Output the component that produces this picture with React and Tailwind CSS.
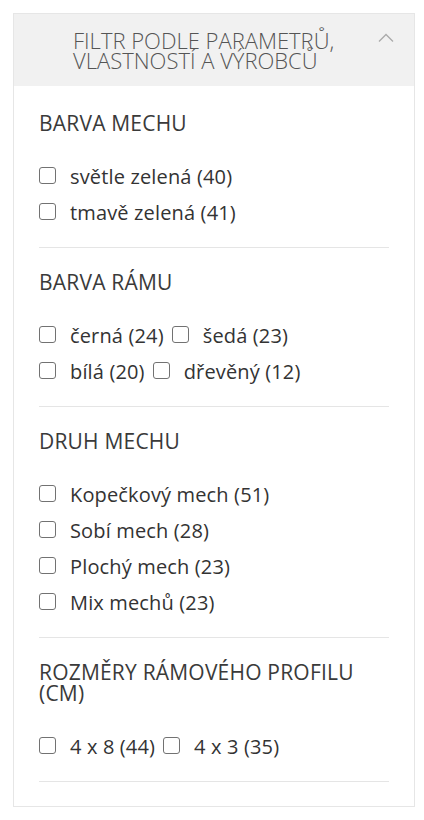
import React from 'react';

const groups = [
  { title: 'Barva mechu', inline: false, items: ['světle zelená (40)', 'tmavě zelená (41)'] },
  { title: 'Barva rámu', inline: true, items: ['černá (24)', 'šedá (23)', 'bílá (20)', 'dřevěný (12)'] },
  { title: 'Druh mechu', inline: false, items: ['Kopečkový mech (51)', 'Sobí mech (28)', 'Plochý mech (23)', 'Mix mechů (23)'] },
  { title: 'Rozměry rámového profilu (cm)', inline: true, items: ['4 x 8 (44)', '4 x 3 (35)'] },
];

const Box = () => (
  <span className="inline-block w-[17px] h-[17px] border-[1.5px] border-[#727272] rounded-[3px] bg-white shrink-0 -translate-y-[2px]" />
);

const Item = ({ label }) => (
  <label className="inline-flex items-center mr-[8px] h-[36px] cursor-pointer">
    <Box />
    <span className="ml-[14px] tracking-[0.15px]">{label}</span>
  </label>
);

const Group = ({ group }) => (
  <div className="border-b border-[#e5e5e5] pt-[24px] pb-[16px]">
    <h3 className="uppercase text-[21px] leading-[21px] text-[#3a3a3a] tracking-[0.2px]">{group.title}</h3>
    <div className={group.inline ? 'mt-[25px] flex flex-wrap' : 'mt-[25px] flex flex-col'}>
      {group.items.map((it) => (
        <Item key={it} label={it} />
      ))}
    </div>
  </div>
);

export default function App() {
  return (
    <div className="bg-white min-h-[820px] pt-[13px] px-[13px]" style={{ fontFamily: '"Open Sans", sans-serif' }}>
      <div className="border border-[#e6e6e6] w-[402px]">
        <div className="bg-[#f1f1f1] h-[72px] relative flex items-center pl-[59px] pr-[50px]">
          <h2 className="uppercase font-light text-[22px] leading-[20px] text-[#555]">
            Filtr podle parametrů, vlastností a výrobců
          </h2>
          <svg className="absolute right-[20px] top-[19px]" width="16" height="10" viewBox="0 0 16 10" fill="none" stroke="#aaa" strokeWidth="1.3">
            <path d="M1 8.5 L8 1.5 L15 8.5" />
          </svg>
        </div>
        <div className="px-[25px] pt-[3px] pb-[24px] text-[20px] text-[#333]">
          {groups.map((g) => (
            <Group key={g.title} group={g} />
          ))}
        </div>
      </div>
    </div>
  );
}
